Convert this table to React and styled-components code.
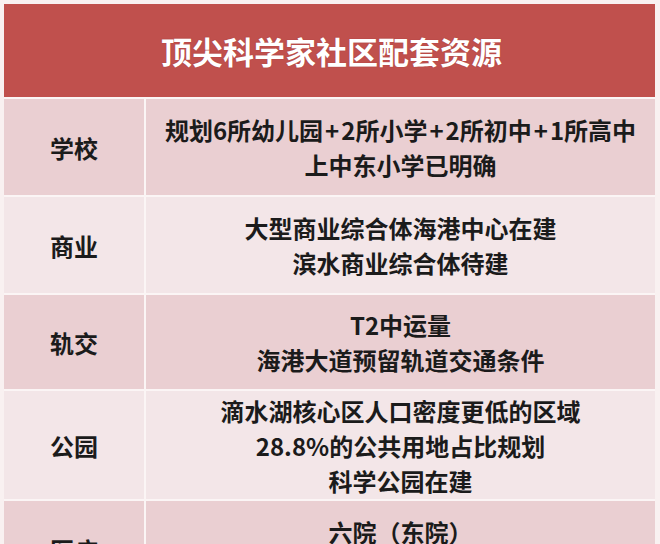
import React from "react";
import styled, { createGlobalStyle } from "styled-components";

const Global = createGlobalStyle`
  html, body { margin: 0; padding: 0; background: #f9f1f1; }
  body { font-family: "Noto Sans CJK SC", "Noto Sans", sans-serif; }
`;

const Page = styled.div`
  width: 660px;
  height: 544px;
  overflow: hidden;
  background: #f9f1f1;
  padding: 4px 0 0 4px;
  box-sizing: border-box;
`;

const Table = styled.div`
  width: 651px;
  display: grid;
  grid-template-columns: 140px 1fr;
  column-gap: 2px;
  row-gap: 2px;
  background: #fbf5f5;
`;

const Header = styled.div`
  grid-column: 1 / span 2;
  height: 93px;
  background: #c0504d;
  color: #ffffff;
  font-size: 31px;
  font-weight: 700;
  display: flex;
  align-items: center;
  justify-content: center;
  padding-left: 4px;
  text-shadow: 0 0 1px rgba(120, 30, 30, 0.5);
`;

const Cell = styled.div`
  height: ${(p) => p.$h}px;
  background: ${(p) => (p.$odd ? "#eacfd2" : "#f3e6e8")};
  color: #1b1b1b;
  font-size: 24px;
  font-weight: 700;
  line-height: 35px;
  display: flex;
  flex-direction: column;
  align-items: center;
  justify-content: center;
  text-align: center;
  white-space: nowrap;
`;

const Plus = styled.span`
  margin: 0 2px;
`;

const Line = ({ text }) => {
  const parts = text.split("+");
  return (
    <span>
      {parts.map((p, i) => (
        <React.Fragment key={i}>
          {i > 0 && <Plus>+</Plus>}
          {p}
        </React.Fragment>
      ))}
    </span>
  );
};

const rows = [
  { label: "学校", h: 96, lines: ["规划6所幼儿园+2所小学+2所初中+1所高中", "上中东小学已明确"] },
  { label: "商业", h: 96, lines: ["大型商业综合体海港中心在建", "滨水商业综合体待建"] },
  { label: "轨交", h: 94, lines: ["T2中运量", "海港大道预留轨道交通条件"] },
  { label: "公园", h: 108, lines: ["滴水湖核心区人口密度更低的区域", "28.8%的公共用地占比规划", "科学公园在建"] },
  { label: "医疗", h: 96, lines: ["六院（东院）", "质子重离子医院"] },
];

export default function App() {
  return (
    <Page>
      <Global />
      <Table>
        <Header>顶尖科学家社区配套资源</Header>
        {rows.map((r, i) => (
          <React.Fragment key={r.label}>
            <Cell $h={r.h} $odd={i % 2 === 0}>{r.label}</Cell>
            <Cell $h={r.h} $odd={i % 2 === 0}>
              {r.lines.map((l) => (
                <Line key={l} text={l} />
              ))}
            </Cell>
          </React.Fragment>
        ))}
      </Table>
    </Page>
  );
}
